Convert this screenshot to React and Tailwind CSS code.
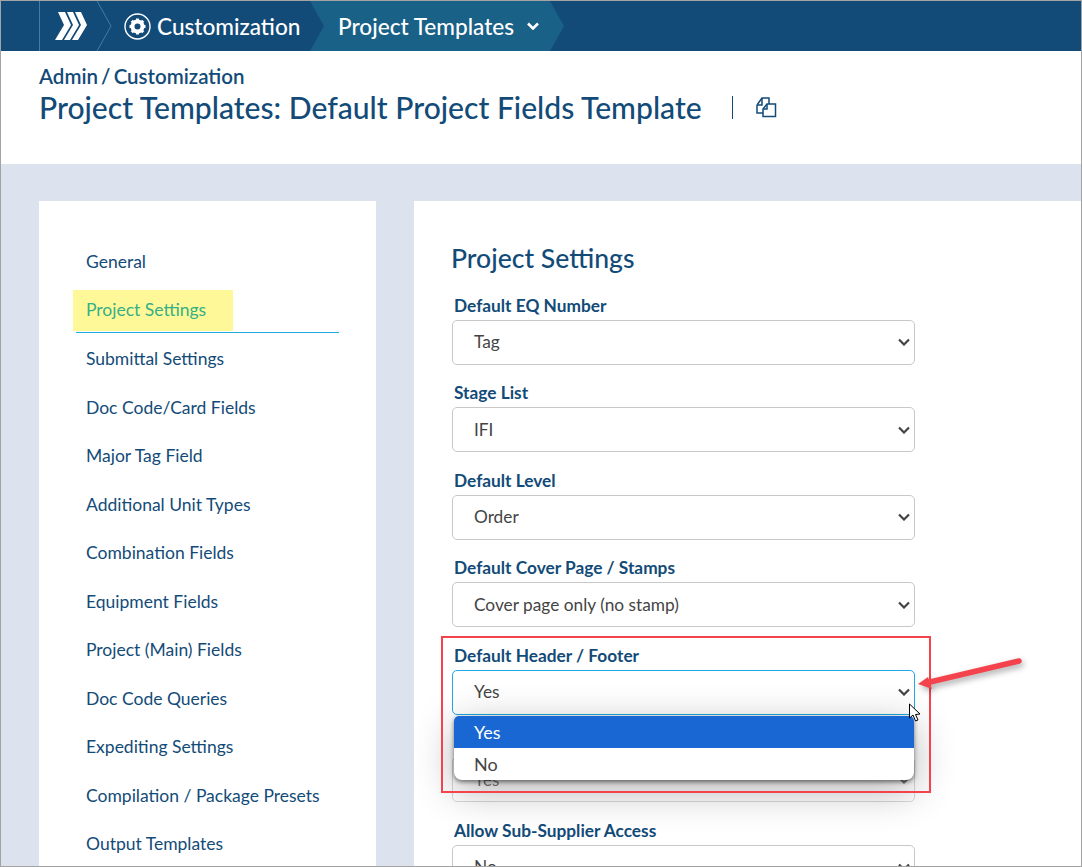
const navItems = [
  "General",
  "Project Settings",
  "Submittal Settings",
  "Doc Code/Card Fields",
  "Major Tag Field",
  "Additional Unit Types",
  "Combination Fields",
  "Equipment Fields",
  "Project (Main) Fields",
  "Doc Code Queries",
  "Expediting Settings",
  "Compilation / Package Presets",
  "Output Templates",
];

const fields = [
  { label: "Default EQ Number", value: "Tag" },
  { label: "Stage List", value: "IFI" },
  { label: "Default Level", value: "Order" },
  { label: "Default Cover Page / Stamps", value: "Cover page only (no stamp)" },
  { label: "Default Header / Footer", value: "Yes", focused: true },
  { label: "", value: "Yes", muted: true },
  { label: "Allow Sub-Supplier Access", value: "No" },
];

function Chevron() {
  return (
    <svg width="16" height="50" viewBox="0 0 16 50" fill="none" className="shrink-0">
      <path d="M0.5 -1 L15 25 L0.5 51" stroke="#3f7ea6" strokeWidth="1" />
    </svg>
  );
}

function Caret({ color, width = 2.2 }) {
  return (
    <svg width="12" height="8" viewBox="0 0 12 8" fill="none" className="shrink-0">
      <path d="M1 1.5 L6 6.5 L11 1.5" stroke={color} strokeWidth={width} />
    </svg>
  );
}

function Logo() {
  return (
    <svg width="32" height="30" viewBox="0 0 32 30" fill="white">
      <path d="M3 1 H10 L16 14 L7 29 H0 L9 14 Z" />
      <path d="M12 1 H18 L24 14 L15 29 H9 L18 14 Z" />
      <path d="M20 1 H26 L32 14 L23 29 H17 L26 14 Z" />
    </svg>
  );
}

function Gear() {
  return (
    <svg width="27" height="27" viewBox="0 0 27 27" fill="none">
      <circle cx="13.5" cy="13.5" r="12.5" stroke="white" strokeWidth="1.4" />
      <circle cx="13.5" cy="13.5" r="5" stroke="white" strokeWidth="4" />
      <g stroke="white" strokeWidth="3">
        <path d="M13.5 5.5 V8" />
        <path d="M13.5 19 V21.5" />
        <path d="M5.5 13.5 H8" />
        <path d="M19 13.5 H21.5" />
        <path d="M7.8 7.8 L9.6 9.6" />
        <path d="M17.4 17.4 L19.2 19.2" />
        <path d="M7.8 19.2 L9.6 17.4" />
        <path d="M17.4 9.6 L19.2 7.8" />
      </g>
    </svg>
  );
}

function CopyIcon() {
  return (
    <svg width="21" height="21" viewBox="0 0 21 21" fill="none" stroke="#134b78" strokeWidth="1.5">
      <path d="M1 8 L6 1 H13 V7" />
      <path d="M1 8 H6 V1" />
      <path d="M1 8 V16 H7" />
      <path d="M7 12 L11 7 H19.5 V19.5 H7 Z" fill="white" />
      <path d="M7 12 H11 V7" />
    </svg>
  );
}

function SelectBox({ value, focused, muted }) {
  return (
    <div
      className={`flex h-[45px] w-[463px] items-center justify-between rounded-[5px] border border-solid pl-[21px] pr-[4px] text-[17.3px] text-[#444] ${
        focused ? "border-[#1fa9e1]" : "border-[#c8c8c8]"
      } ${muted ? "opacity-70" : ""}`}
    >
      <span>{value}</span>
      <Caret color="#444" />
    </div>
  );
}

function App() {
  return (
    <div className="relative h-[867px] w-[1082px] overflow-hidden border border-[#a3a3a3] bg-[#dce2ee] font-['Lato','Liberation_Sans',sans-serif]">
      <header className="flex h-[50px] items-stretch overflow-hidden bg-[#134b78] pl-[38px] text-[22.6px] font-medium text-white">
        <div className="flex w-[57px] items-center border-l border-[#3f7ea6] pl-[15px]">
          <Logo />
        </div>
        <Chevron />
        <div className="ml-[12px] flex w-[187px] items-center gap-[6px]">
          <Gear />
          <span className="mt-[2px]">Customization</span>
        </div>
        <div className="-ml-[1px] flex w-[254px] items-center bg-[#1a6187] pl-[28px] [clip-path:polygon(0_0,240px_0,254px_50%,240px_100%,0_100%,14px_50%)]">
          <span className="mt-[2px]">Project Templates</span>
          <span className="ml-[13px]">
            <Caret color="white" width={2.6} />
          </span>
        </div>
      </header>

      <div className="h-[113px] bg-white pl-[38px] pt-[13px] text-[#134b78]">
        <div className="h-[25px] text-[20.5px] font-semibold leading-[24px] [word-spacing:-2px]">Admin / Customization</div>
        <div className="flex items-center">
          <h1 className="-mt-px text-[30.1px] leading-[38px] font-medium">Project Templates: Default Project Fields Template</h1>
          <span className="ml-[30px] h-[23px] w-px bg-[#134b78]" />
          <span className="ml-[23px]">
            <CopyIcon />
          </span>
        </div>
      </div>

      <div className="flex gap-[38px] pl-[38px] pt-[37px]">
        <nav className="h-[700px] w-[337px] shrink-0 bg-white pl-[37px] pr-[37px] pt-[37.3px]">
          {navItems.map((item, i) =>
            i === 1 ? (
              <div key={item} className="flex h-[48.5px] flex-col pt-[3.2px] text-[17.5px] text-[#35b085]">
                <span className="-ml-[3px] flex h-[41px] w-[160px] shrink-0 items-center bg-[#fff899] pl-[13px]">{item}</span>
                <div className="mt-[1px] h-px shrink-0 bg-[#1fa9e1]" />
              </div>
            ) : (
              <div key={item} className="flex h-[48.5px] items-center pl-[10px] text-[17.5px] text-[#134b78]">
                {item}
              </div>
            )
          )}
        </nav>

        <main className="h-[700px] flex-1 bg-white pl-[38px] pt-[39px]">
          <h2 className="-ml-px mb-[19.9px] text-[26.6px] leading-[36px] font-medium text-[#134b78]">Project Settings</h2>
          <div className="flex flex-col">
            {fields.map((f, i) => (
              <div key={i} className="h-[87.5px]">
                <label className="block h-[24px] pl-[2px] text-[17.3px] leading-[19px] font-bold text-[#134b78]">
                  {f.label || "\u00a0"}
                </label>
                <SelectBox value={f.value} focused={f.focused} muted={f.muted} />
              </div>
            ))}
          </div>
        </main>
      </div>

      {/* open dropdown */}
      <div className="absolute left-[453px] top-[715px] w-[460px] overflow-hidden rounded-b-[8px] rounded-t-[5px] bg-white text-[18px] text-[#444] shadow-[0_2px_4px_rgba(0,0,0,0.5),0_10px_40px_rgba(0,0,0,0.3)]">
        <div className="flex h-[32px] items-center bg-[#1967d2] pl-[20px] text-white">Yes</div>
        <div className="flex h-[32px] items-center pl-[20px]">No</div>
      </div>

      {/* annotation */}
      <div className="absolute left-[440px] top-[635px] h-[157px] w-[490px] border-2 border-solid border-[#f4434c]" />
      <svg className="absolute left-[915px] top-[654px] drop-shadow-[2px_3px_3px_rgba(0,0,0,0.35)]" width="110" height="40" viewBox="0 0 110 40" fill="none">
        <path d="M103 6 L14 27" stroke="#f4434c" strokeWidth="5.5" strokeLinecap="round" />
        <path d="M2 29 L12 22 L16 34 Z" fill="#f4434c" />
      </svg>
      <svg className="absolute left-[907px] top-[702px]" width="14" height="20" viewBox="0 0 14 20" fill="white" stroke="black" strokeWidth="1">
        <path d="M1.5 1 V15 L5 12 L7.5 18 L10 17 L7.5 11.5 L12 11 Z" />
      </svg>
    </div>
  );
}

export default App;
